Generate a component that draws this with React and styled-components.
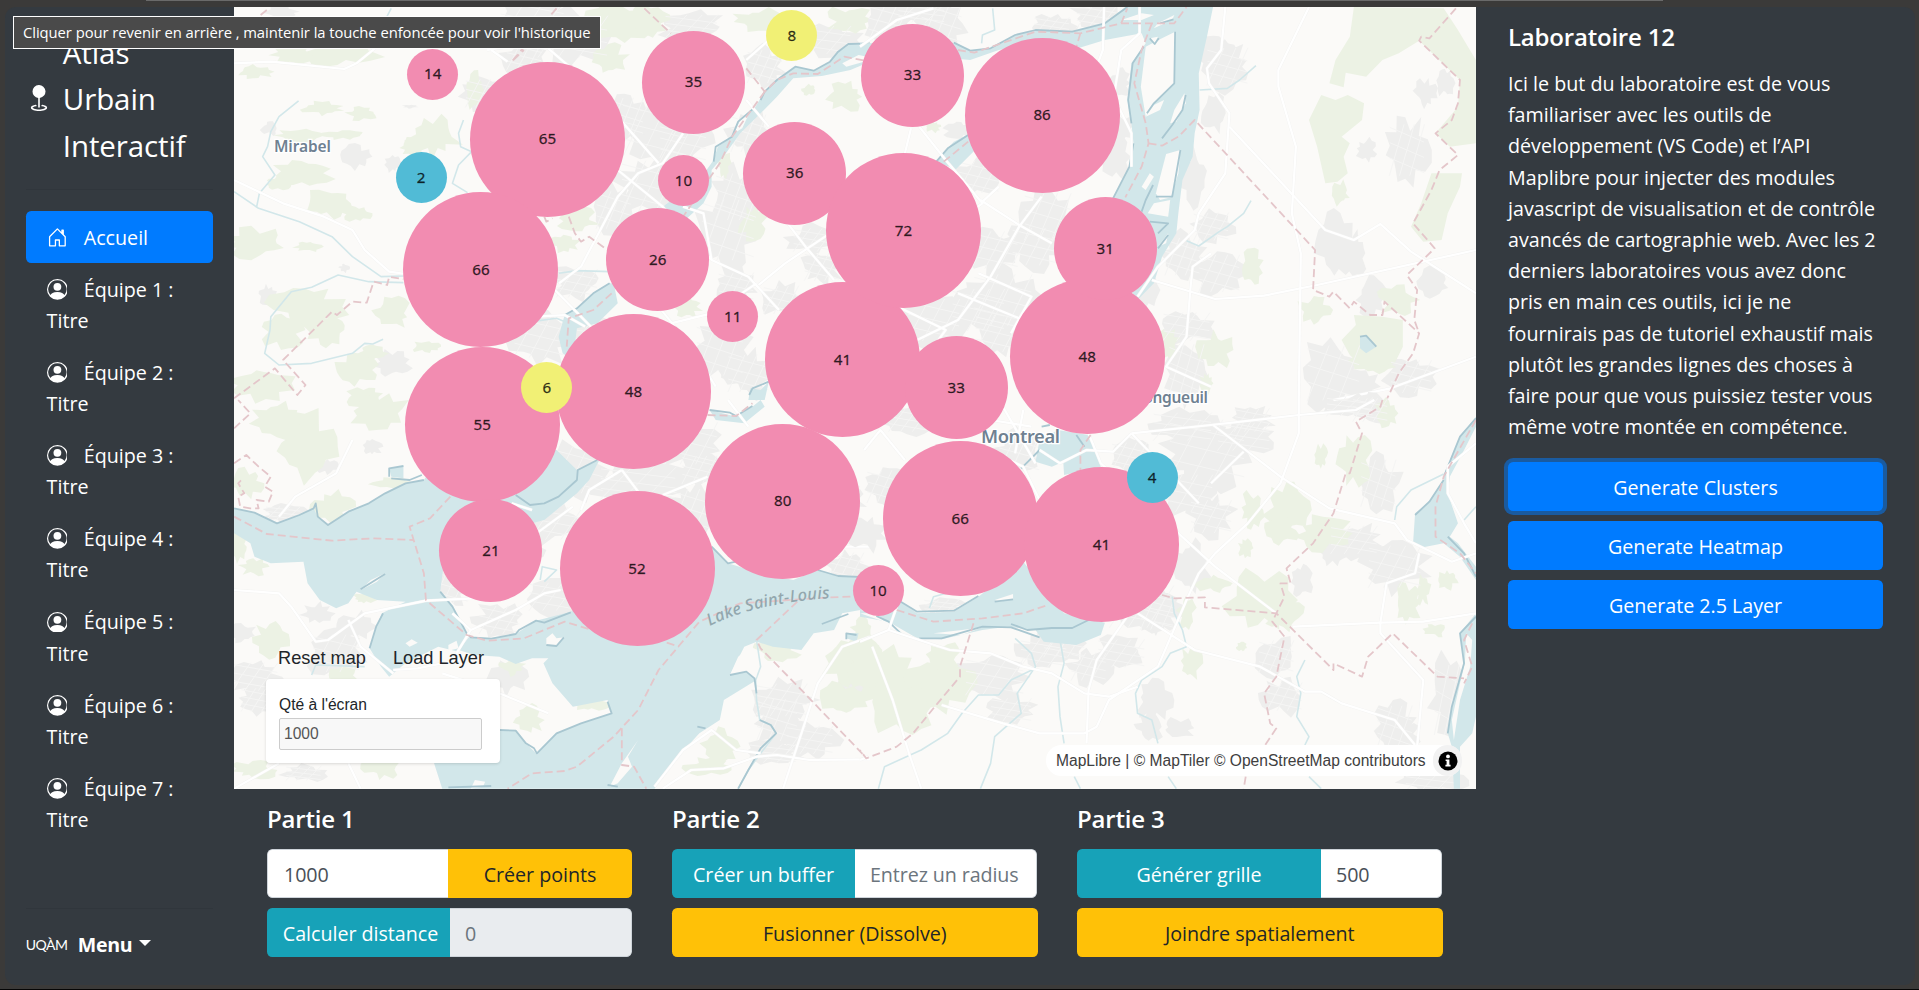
import React from 'react';
import styled, { createGlobalStyle, css } from 'styled-components';
import { BsGeoFill, BsHouseDoor, BsPersonCircle } from 'react-icons/bs';

const GlobalStyle = createGlobalStyle`
  *, *::before, *::after { box-sizing: border-box; }
  html, body { margin: 0; padding: 0; height: 990px; overflow: hidden; }
  body {
    font-family: 'Open Sans', 'Noto Sans', sans-serif;
    font-size: 19.7px;
    line-height: 31.2px;
    color: #fff;
    background: #3b3a39;
  }
  button, input { font: inherit; margin: 0; }
`;

/* ---------- window frame ---------- */

const Window = styled.div`
  position: relative;
  width: 1919px;
  height: 990px;
  padding: 7px 4px 5px 5px;
  background: #3b3a39;
  border-bottom: 1px solid #050505;
`;

const TopEdge = styled.div`
  position: absolute;
  top: 0;
  left: 146px;
  width: 1517px;
  height: 1px;
  background: #6a6a6a;
`;

const Page = styled.div`
  display: grid;
  grid-template-columns: 229px 1242px 1fr;
  height: 978px;
  border-radius: 11px;
  overflow: hidden;
  background: #343a40;
`;

const Tooltip = styled.div`
  position: absolute;
  z-index: 5;
  left: 13px;
  top: 16px;
  width: 588px;
  height: 33px;
  padding-left: 9px;
  border: 1px solid #fff;
  background: #4a4a4a;
  font-size: 14.8px;
  line-height: 31px;
  letter-spacing: -0.06px;
  white-space: nowrap;
`;

/* ---------- sidebar ---------- */

const Sidebar = styled.aside`
  display: flex;
  flex-direction: column;
  padding: 20.6px 20.8px;
`;

const Brand = styled.div`
  display: flex;
  align-items: center;
  height: 140.4px;
  font-size: 29.5px;
  line-height: 46.8px;
  letter-spacing: -0.1px;

  svg { flex: none; width: 26px; height: 26px; margin-right: 11px; }
  span { padding-top: 4px; }
`;

const Rule = styled.hr`
  width: 100%;
  height: 1px;
  margin: 20.8px 0;
  border: 0;
  background: rgba(0, 0, 0, 0.06);
`;

const Nav = styled.nav`
  display: flex;
  flex-direction: column;
  flex: 1;
`;

const NavItem = styled.a`
  padding: 11px 20.8px 9.8px;
  border-radius: 5.2px;
  color: #fff;
  white-space: nowrap;
  ${(p) => p.$active && css`background: #007bff;`}

  svg {
    width: 20.8px;
    height: 20.8px;
    margin-right: 16.3px;
    vertical-align: -3px;
  }
`;

const MenuToggle = styled.div`
  display: flex;
  align-items: center;
  height: 31px;
  margin-bottom: 4px;
  font-weight: 700;
  font-size: 19.6px;
  letter-spacing: -0.3px;
`;

const Uqam = styled.span`
  width: 52px;
  font-family: Lato, sans-serif;
  font-size: 14px;
  font-weight: 400;
  letter-spacing: -0.5px;
`;

const Caret = styled.i`
  margin: -3px 0 0 7px;
  border: 6.2px solid transparent;
  border-top-color: #fff;
  border-bottom: 0;
`;

/* ---------- centre column ---------- */

const Main = styled.main`
  display: flex;
  flex-direction: column;
`;

const MapView = styled.section`
  position: relative;
  height: 782px;
  overflow: hidden;
  background: #fbfaf8;
`;

const MapArt = styled.svg`
  display: block;
  width: 1242px;
  height: 782px;
`;

const TONES = { pink: '#f28cb1', yellow: '#f1f075', blue: '#51bbd6' };

const Cluster = styled.div`
  position: absolute;
  left: ${(p) => p.$x - p.$r - 234.5}px;
  top: ${(p) => p.$y - p.$r - 7}px;
  width: ${(p) => p.$r * 2}px;
  height: ${(p) => p.$r * 2}px;
  display: flex;
  align-items: center;
  justify-content: center;
  border-radius: 50%;
  background: ${(p) => TONES[p.$tone]};
  color: rgba(0, 0, 0, 0.78);
  font-family: 'Noto Sans', 'Open Sans', sans-serif;
  font-size: 15.2px;
  line-height: 1;
  -webkit-text-stroke: 0.35px rgba(0, 0, 0, 0.6);
`;

const MapControls = styled.div`
  position: absolute;
  left: 32px;
  bottom: 26px;
  width: 234px;
  color: #212529;
  font-family: 'Liberation Sans', Arial, sans-serif;
`;

const MapLinks = styled.div`
  display: flex;
  gap: 27px;
  height: 42px;
  padding-left: 12px;
  font-size: 18.2px;
  line-height: 42px;
`;

const CountCard = styled.label`
  display: flex;
  flex-direction: column;
  height: 84px;
  padding: 16px 18px 13px 13px;
  border-radius: 4px;
  background: #fff;
  box-shadow: 0 1px 3px rgba(0, 0, 0, 0.14);
  font-size: 15.6px;
  line-height: 20px;
`;

const CountInput = styled.input`
  height: 32px;
  margin-top: 3px;
  padding: 0 4px;
  border: 1px solid #ccc;
  border-radius: 2px;
  background: #f8f8f8;
  color: #555;
`;

const Attribution = styled.div`
  position: absolute;
  right: 14px;
  bottom: 13px;
  display: flex;
  align-items: center;
  justify-content: space-between;
  width: 416px;
  height: 31px;
  padding-left: 10px;
  border-radius: 16px;
  background: #fff;
  color: #404040;
  font: 15.6px/31px 'Liberation Sans', Arial, sans-serif;
  white-space: nowrap;
`;

const InfoButton = styled.span`
  display: flex;
  align-items: center;
  justify-content: center;
  width: 29px;
  height: 31px;
  border-radius: 15px;
  background: #f2f2f2;
`;

const Parts = styled.section`
  display: grid;
  grid-template-columns: repeat(3, 365.5px);
  gap: 39.5px;
  padding: 13px 33px 0;
`;

const Part = styled.div`
  display: flex;
  flex-direction: column;
  gap: 10px;
`;

const Heading = styled.h5`
  margin: 0;
  height: 37px;
  font-size: 24px;
  font-weight: 600;
  line-height: 33px;
  letter-spacing: -0.2px;
`;

const Group = styled.div`
  display: flex;
  width: 365px;
  height: 49px;
  border-radius: 5.2px;
  overflow: hidden;
`;

const KINDS = {
  primary: ['#007bff', '#fff'],
  warning: ['#ffc107', '#212529'],
  info: ['#17a2b8', '#fff'],
};

const Button = styled.button`
  width: ${(p) => (p.$width ? `${p.$width}px` : '100%')};
  flex: none;
  height: 49px;
  padding: 2px 0 0;
  border: 0;
  border-radius: ${(p) => (p.$width ? 0 : 5.2)}px;
  background: ${(p) => KINDS[p.$kind][0]};
  color: ${(p) => KINDS[p.$kind][1]};
  letter-spacing: -0.03px;
  white-space: nowrap;
  ${(p) => p.$focused && css`box-shadow: 0 0 0 4px rgba(0, 123, 255, 0.5);`}
`;

const DistanceButton = styled(Button)`
  padding-left: 4px;
`;

const Field = styled.input`
  flex: 1;
  min-width: 0;
  height: 49px;
  padding: 1px 12px 0 ${(p) => (p.$left ? 16 : 15)}px;
  border: 1px solid #ced4da;
  border-radius: ${(p) => (p.$left ? '5.2px 0 0 5.2px' : '0 5.2px 5.2px 0')};
  border-${(p) => (p.$left ? 'right' : 'left')}-width: 0;
  background: ${(p) => (p.disabled ? '#e9ecef' : '#fff')};
  color: #495057;
  outline: 0;
  letter-spacing: -0.1px;
  &::placeholder { color: #6c757d; opacity: 1; }
`;

/* ---------- right column ---------- */

const Lab = styled.aside`
  padding: 12.5px 32px 0;
`;

const LabText = styled.p`
  margin: 11.5px 0 19.5px;
  white-space: nowrap;
`;

const Stack = styled.div`
  display: flex;
  flex-direction: column;
  gap: 10px;
`;

/* ---------- base map ---------- */

const Urban = styled.path`fill: #eeeeed;`;
const Green = styled.path`fill: #ecf2e4;`;
const Water = styled.path`fill: #d2e7ea;`;
const Land = styled.path`fill: #fbfaf8;`;
const Line = styled.path`
  fill: none;
  vector-effect: non-scaling-stroke;
  stroke-linejoin: round;
  stroke: ${(p) => p.$c};
  stroke-width: ${(p) => p.$w};
  ${(p) => p.$dash && css`stroke-dasharray: 8 4;`}
`;
const Place = styled.text`
  font-family: 'Noto Sans', sans-serif;
  font-weight: 600;
  fill: #6f8191;
  stroke: #fff;
  stroke-width: 2.5px;
  paint-order: stroke;
`;
const LakeName = styled.text`
  font-family: 'Noto Sans', sans-serif;
  font-style: italic;
  font-weight: 500;
  font-size: 16.5px;
  fill: #93a7ae;
`;

/* ragged outline around a centre, stable for a given position */
function blob([cx, cy, rx, ry]) {
  let seed = (cx * 7919 + cy * 104729) % 2147483647;
  const rnd = () => {
    seed = (seed * 48271) % 2147483647;
    return seed / 2147483647;
  };
  const n = 19;
  let d = '';
  for (let i = 0; i < n; i += 1) {
    const a = (i / n) * Math.PI * 2;
    const k = 0.5 + rnd() * 0.6;
    d += `${i ? 'L' : 'M'}${(cx + Math.cos(a) * rx * k).toFixed(0)} ${(cy + Math.sin(a) * ry * k).toFixed(0)}`;
  }
  return `${d}Z`;
}

/* short street segments inside a built-up patch */
function streets([cx, cy, rx, ry]) {
  let d = '';
  for (let i = -1; i <= 1; i += 1) {
    const o = (i * rx) / 2.4;
    d += `M${cx + o - rx * 0.3} ${cy + ry * 0.7}L${cx + o + rx * 0.3} ${cy - ry * 0.7}`;
    const v = (i * ry) / 2.4;
    d += `M${cx - rx * 0.7} ${cy + v - ry * 0.2}L${cx + rx * 0.7} ${cy + v + ry * 0.2}`;
  }
  return d;
}

const TILES = [
  {
    at: [230, 0],
    urban: [[310, 470, 45, 40], [400, 490, 25, 30], [440, 320, 22, 6], [100, 385, 25, 25], [90, 885, 28, 35], [280, 805, 14, 15],
      [130, 35, 50, 22], [740, 60, 110, 90], [840, 110, 120, 90], [720, 170, 60, 60], [620, 280, 60, 60], [1040, 390, 110, 120], [970, 350, 60, 80], [1110, 430, 80, 80], [1270, 400, 60, 80],
      [1030, 560, 100, 110], [940, 630, 60, 80], [1220, 690, 90, 130], [1240, 590, 70, 100], [1300, 500, 40, 60], [1130, 80, 90, 50], [1450, 120, 100, 60], [1310, 200, 60, 70],
      [850, 850, 70, 60], [760, 1010, 90, 90], [900, 1000, 90, 60], [1200, 1050, 80, 110], [1270, 1120, 70, 80], [400, 1090, 50, 45], [1240, 860, 60, 60], [1430, 720, 70, 50], [1350, 900, 60, 60], [1450, 800, 60, 60]],
    green: [[270, 150, 110, 60], [150, 160, 60, 40], [60, 215, 50, 25], [230, 325, 60, 25], [320, 340, 45, 22], [170, 410, 70, 25], [280, 405, 60, 15], [500, 410, 70, 70], [450, 440, 40, 30],
      [180, 520, 80, 50], [120, 550, 40, 20], [240, 610, 60, 50], [310, 640, 40, 25], [60, 730, 90, 50], [190, 740, 40, 20], [190, 920, 100, 70], [130, 990, 60, 60], [240, 990, 60, 60], [400, 940, 50, 50],
      [310, 1110, 60, 50], [70, 1150, 90, 60], [350, 1060, 45, 25], [480, 1040, 40, 20], [600, 270, 30, 60], [950, 70, 90, 80], [1020, 60, 60, 50], [930, 180, 50, 50], [1300, 60, 80, 40], [1520, 60, 60, 50],
      [1510, 290, 50, 50], [1420, 270, 20, 20], [1280, 670, 40, 60], [1210, 490, 18, 50], [1120, 920, 40, 40], [850, 660, 60, 40], [820, 730, 40, 30], [540, 1130, 60, 50], [330, 1190, 60, 40]],
    water: ['M1568 130 1520 132 1490 155 1470 185 1430 212 1385 200 1340 240 1310 275 1285 325 1245 370 1230 410 1195 440 1185 480 1150 540 1060 620 1120 655 1160 610 1180 560 1180 510 1215 460 1250 400 1300 340 1340 290 1380 235 1450 228 1520 210 1568 185Z',
      'M930 850 890 880 850 925 820 945 805 1010 815 1060 840 1080 850 985 900 970 950 910 940 850Z',
      'M1270 1200 1275 1165 1300 1170 1320 1145 1310 1200Z'],
    land: ['M1500 190 1540 165 1568 172 1568 180 1510 200Z', 'M1235 400 1250 360 1270 345 1255 385Z'],
    shore: ['M1568 130 1515 132 1490 155 1470 185 1430 212 1385 200 1340 240 1310 275 1300 300', 'M1280 328 1245 365 1230 410 1190 440 1185 485', 'M930 850 890 880 850 925 820 945', 'M1272 1185 1280 1165 1320 1145'],
    stream: ['M168 303 120 350 100 395 92 440 80 470 110 525 72 580 65 622', 'M10 575 70 625 170 665 250 710 300 770 370 830 425 828', 'M425 848 340 845 265 825 200 862 150 875 100 950 98 990 85 1060 120 1095 200 1090 300 1060 330 1030 350 1032 375 1018',
      'M572 360 560 400 565 440 592 455 560 495 545 550 582 578', 'M806 820 850 812 930 815', 'M1110 400 1080 450', 'M740 965 800 955 850 980', 'M380 60 395 25'],
    road: ['M10 190 100 185 280 207 310 190 355 145', 'M640 150 680 185', 'M10 540 130 610 230 650 300 690 330 750 390 815 430 822', 'M630 150 760 125 870 240 1050 490', 'M806 850 860 800 950 590 1000 520 1060 490 1110 400', 'M950 510 1060 620 1180 780 1270 830 1345 930', 'M1265 300 1320 380', 'M1265 180 1320 120', 'M1295 855 1360 790 1470 700', 'M1310 580 1410 740 1480 840', 'M1080 970 1180 940 1290 850', 'M1050 920 1090 980 1150 1080 1190 1160', 'M740 800 900 1000', 'M750 950 820 945 870 980', 'M1110 620 1160 640 1180 780'],
    border: ['M10 1195 110 1105 165 1185 185 1155 130 1080 250 935 262 945 300 905 335 908 352 845 385 855 390 830 425 838', 'M830 650 845 700 860 725 880 710 930 755', 'M770 650 775 665 790 655', 'M800 25 690 185 720 150', 'M1015 25 1080 100', 'M1265 205 1310 275 1340 240 1380 220 1440 222 1505 170 1568 185', 'M1310 275 1230 410 1200 490 1160 560 1110 650', 'M935 880 890 930 830 955 825 1040', 'M75 45 95 25'],
  },
  {
    at: [860, 0],
    urban: [[70, 70, 70, 80], [200, 70, 70, 90], [150, 40, 80, 40], [580, 50, 70, 50], [470, 80, 60, 40], [900, 200, 70, 80], [870, 150, 50, 50], [870, 340, 40, 60], [635, 250, 35, 50], [630, 470, 40, 90], [640, 390, 40, 50],
      [1340, 450, 60, 110], [1240, 450, 30, 40], [1385, 280, 30, 45], [1435, 250, 22, 50], [1165, 740, 50, 110], [1210, 760, 35, 70], [860, 680, 60, 60], [790, 770, 60, 80], [880, 820, 70, 80], [820, 540, 40, 110],
      [290, 530, 70, 70], [460, 650, 80, 100], [330, 750, 80, 80], [430, 740, 80, 80], [350, 900, 100, 110], [290, 930, 90, 90], [180, 960, 90, 90], [340, 1000, 80, 80], [1250, 890, 40, 70], [1400, 850, 50, 50], [1160, 1120, 90, 120],
      [1350, 1130, 70, 70], [800, 980, 80, 60], [800, 1110, 60, 110], [700, 870, 40, 60], [240, 390, 40, 30], [1230, 1160, 50, 60]],
    green: [[960, 800, 30, 60], [1115, 930, 45, 50], [870, 1050, 50, 60], [755, 1030, 30, 50], [1178, 580, 22, 40], [1320, 900, 60, 50], [180, 380, 22, 20], [850, 1150, 20, 40], [1260, 1090, 60, 40]],
    greenShape: ['M1210 21 1430 25 1465 90 1509 180 1509 430 1445 440 1410 400 1465 320 1470 240 1370 122 1320 160 1280 180 1240 230 1190 218 1185 262 1150 250 1165 180 1200 110Z',
      'M1130 285 1165 300 1195 285 1235 310 1230 360 1180 410 1200 430 1185 470 1195 520 1170 545 1140 550 1120 440 1100 360Z',
      'M1400 520 1475 520 1470 560 1440 640 1425 720 1380 725 1350 680 1375 610Z', 'M1180 1020 1215 975 1210 945 1280 950 1330 960 1330 1040 1310 1090 1240 1110 1200 1065Z'],
    water: ['M0 130 100 128 230 128 270 152 320 145 380 105 430 90 520 95 600 70 650 21 865 21 850 110 830 220 832 330 820 400 815 470 790 540 780 640 775 700 740 770 720 850 680 900 650 850 640 700 620 595 640 550 660 500 670 430 665 370 655 300 665 190 700 130 690 100 600 120 520 150 440 130 340 150 270 180 0 150Z',
      'M270 400 230 425 210 450 185 485 235 508 290 440Z', 'M1225 1010 1240 1005 1265 1040 1240 1060 1225 1045Z'],
    land: ['M700 140 735 118 772 95 770 250 720 310 700 350 688 260Z', 'M750 462 785 450 780 520 762 592 735 600 725 580Z', 'M690 60 720 45 690 40 640 60Z', 'M720 85 765 60 770 45 730 70Z', 'M700 350 720 315 745 300 735 330Z', 'M795 280 770 330 760 370 775 365 798 310Z',
      'M710 520 720 530 700 570 690 560Z', 'M720 610 760 600 755 650 705 640Z', 'M730 740 755 700 750 730Z', 'M710 115 730 110 722 130Z'],
    shore: ['M230 128 270 152 320 145 380 105 430 90 520 95 600 70 655 21', 'M695 140 668 190 657 300 665 370', 'M670 430 660 500 620 595', 'M772 95 770 250 720 310 703 340', 'M265 405 215 445 187 485', 'M1225 1010 1240 1007 1265 1040', 'M785 450 765 590 725 590', 'M798 285 790 330 765 375 740 415', 'M710 665 755 670 730 700', 'M735 70 768 58', 'M710 115 722 132 732 115', 'M718 555 700 600 690 635', 'M755 705 730 745'],
    stream: ['M970 197 930 240 900 265 832 270', 'M958 602 940 640 900 680 880 695 830 738 800 722', 'M325 25 330 90 300 105 298 130'],
    road: ['M598 21 595 150 555 280', 'M685 21 685 100 640 150 622 290 665 400 665 500', 'M895 21 885 150 850 205 855 250 905 340 895 520 830 640 820 690 730 800 680 890', 'M1100 21 1025 210 1025 260 1068 440 1058 640 1080 760 1075 1200', 'M715 840 870 897 990 887 1120 855 1509 750', 'M905 380 1140 690 1210 720 1275 672 1350 755 1509 880', 'M1160 1200 1300 1165 1509 1070', 'M445 590 390 680 320 830 240 960 140 1020', 'M295 600 390 675 470 730', 'M145 380 210 480 300 610 200 700', 'M125 385 110 460', 'M290 820 420 890 370 1000', 'M240 880 400 960', 'M100 925 210 990 180 1040', 'M860 760 815 800 810 860 800 1010 750 1100 860 1160', 'M0 140 90 60 180 25', 'M300 605 340 560'],
    border: ['M240 150 280 158 430 95 540 100 640 70 715 70 770 70 800 21', 'M540 100 530 140', 'M715 70 690 150 672 250 700 370 707 430 690 500 650 592', 'M707 430 740 437 780 410 820 360 1115 750 1110 870 1150 890 1160 875 1200 925 1210 905 1250 945 1280 945 1285 905 1370 1000 1355 1060 1320 1120 1290 1200', 'M1460 25 1395 115 1375 110 1370 122 1470 240 1465 310 1450 360 1410 400 1465 465 1420 510 1400 570 1355 670 1408 745 1340 825 1365 870 1358 960 1370 1000', 'M205 485 265 425', 'M640 70 655 25'],
  },
  {
    at: [230, 400],
    urban: [[210, 640, 45, 35], [240, 200, 30, 25], [130, 340, 60, 30], [350, 140, 25, 30], [260, 760, 80, 80], [310, 680, 50, 50], [60, 830, 80, 60], [70, 900, 60, 50], [30, 700, 40, 30], [850, 210, 90, 100], [1000, 250, 130, 70], [1130, 130, 90, 90], [1150, 210, 60, 60],
      [800, 370, 90, 70], [700, 450, 70, 60], [790, 590, 80, 60], [660, 660, 70, 60], [540, 560, 60, 70], [1130, 330, 70, 90], [1350, 900, 90, 70], [1420, 1020, 80, 60], [1340, 960, 70, 90], [1330, 1060, 80, 40], [680, 830, 50, 60], [180, 1120, 60, 30], [1510, 500, 60, 60], [850, 480, 40, 60], [1530, 860, 50, 40], [1500, 300, 60, 60]],
    green: [[190, 140, 100, 110], [120, 60, 70, 60], [370, 40, 80, 60], [40, 250, 50, 50], [250, 320, 60, 50], [60, 500, 40, 30], [330, 595, 30, 18], [100, 720, 50, 60], [370, 1100, 50, 40], [280, 820, 40, 30], [730, 960, 40, 50], [690, 800, 40, 30], [1340, 750, 60, 40], [1520, 780, 80, 90], [1500, 900, 60, 60], [1200, 1040, 50, 60], [1170, 1100, 60, 30], [880, 910, 50, 30], [60, 1110, 60, 30], [400, 250, 60, 20], [760, 240, 40, 40], [1550, 690, 30, 50], [20, 440, 30, 50]],
    water: ['M10 325 60 338 115 370 170 345 205 325 215 350 240 375 290 335 340 310 380 280 430 250 475 240 520 160 800 150 850 210 905 180 880 240 850 280 800 330 770 360 740 370 680 340 600 380 560 420 525 480 515 575 545 620 580 700 560 755 510 740 430 790 390 830 370 800 342 745 355 690 372 640 430 605 360 600 310 575 290 610 260 625 220 600 190 550 180 485 100 490 60 470 50 430 10 400Z',
      'M560 750 585 712 640 716 700 702 750 662 835 635 900 560 1180 440 1220 490 1300 520 1380 540 1440 510 1500 530 1568 530 1568 625 1500 640 1480 690 1430 700 1400 750 1330 740 1290 725 1260 740 1225 825 1270 815 1290 840 1210 900 1200 960 1150 1000 1090 1080 1040 1166 520 1166 500 1090 640 990 700 990 725 1030 750 1060 800 1000 860 970 935 940 925 900 840 920 790 850 768 790 780 775 740 775 700 792 660 770 600 765Z',
      'M390 205 425 200 425 235 395 230Z', 'M1175 30 1240 50 1280 20 1300 0 1310 20 1260 70 1190 60Z', 'M1510 700 1540 700 1535 725 1510 715Z'],
    land: ['M320 570 345 540 380 520 360 545Z', 'M775 715 790 700 800 715 820 712 800 735 775 735Z', 'M430 730 445 718 460 728 440 740Z', 'M535 735 555 722 560 745 535 752Z', 'M1000 1020 960 1090 930 1160 950 1150 985 1100 975 1070Z', 'M1225 825 1245 770 1280 735 1290 830 1260 815Z', 'M590 1166 600 1140 625 1145 620 1160Z'],
    shore: ['M10 325 60 338 115 370 170 345 205 325 210 310 215 350 240 375 290 335 340 310 380 280 430 250 475 240', 'M700 285 735 315 770 310 805 290 850 240 852 210 900 180', 'M515 575 545 620 580 700 590 712 640 716 700 702 708 690 750 662 770 668 835 637', 'M1180 440 1220 490 1240 485', 'M1440 510 1490 528 1568 532', 'M660 990 700 992 725 1030 745 1045 752 1060 800 1000 860 970 935 940 925 905', 'M320 568 380 522', 'M775 735 800 738 818 712', 'M342 745 358 680 375 640', 'M1225 825 1265 815 1285 835 1290 880', 'M1450 672 1515 642', 'M1175 30 1225 38 1240 48 1280 18', 'M390 230 390 205 425 198', 'M1145 980 1165 985', 'M925 1155 950 1160', 'M535 1162 640 1158', 'M395 235 440 240 470 225', 'M1298 960 1325 975 1338 1000 1300 1045 1270 1110 1245 1166', 'M1510 718 1510 700 1535 705'],
    stream: ['M1290 720 1300 800 1288 840 1290 900 1298 960 1325 975 1338 1000 1300 1060 1270 1110 1245 1166', 'M1465 590 1480 560 1568 570', 'M760 540 765 500 800 510 770 545', 'M200 825 210 795 330 800'],
    road: ['M10 570 120 580 150 620 210 725 240 720 330 640 480 602 600 595', 'M555 760 590 690 700 630 770 580 810 570', 'M590 690 545 640', 'M960 210 1000 275', 'M1050 290 1170 230', 'M1220 0 1270 80', 'M860 330 880 270 960 210', 'M690 310 740 330', 'M10 1166 120 1090', 'M290 1090 320 1166', 'M120 350 160 290 260 220 300 120', 'M400 810 460 805 560 780', 'M290 660 320 740 400 820', 'M1060 1166 1130 1110 1210 1105 1290 1070 1340 1065 1420 1080 1568 1078', 'M1355 1166 1400 1000 1440 850 1500 740 1568 710', 'M1040 1160 1110 1050 1180 990 1240 1050 1300 1060', 'M520 820 620 860 780 940', 'M740 410 840 320', 'M1500 440 1568 440'],
    border: ['M10 350 90 402 250 422 350 415 450 420', 'M540 290 490 355 440 380 475 520 480 600 580 705 630 722 720 715 770 690 820 665 900 695', 'M1070 728 1100 740', 'M1520 590 1470 592 1250 610 1150 665 1050 810 1000 930 940 1010 850 1100 820 1113 740 1120 680 1166', 'M960 985 960 1095 990 1100 1020 1166', 'M1390 605 1290 720 1300 745 1400 870 1560 1075', 'M10 85 50 40 20 0', 'M10 190 40 165 70 200 100 230 85 260 105 275 95 305 65 300 70 325 50 325 25 320 20 290 35 280 20 250 28 240', 'M1170 45 1240 48 1280 10'],
  },
  {
    at: [860, 400],
    urban: [[120, 60, 70, 50], [390, 160, 70, 80], [60, 260, 60, 70], [20, 400, 50, 60], [660, 170, 60, 60], [850, 150, 130, 130], [790, 80, 100, 60], [940, 110, 90, 60], [800, 280, 90, 80], [860, 350, 70, 70], [690, 620, 110, 90], [640, 760, 80, 60], [730, 640, 60, 70], [450, 760, 80, 60], [330, 830, 100, 80], [370, 930, 70, 50], [560, 800, 60, 60], [1200, 20, 80, 40], [1250, 30, 60, 50], [1310, 500, 90, 90], [1210, 420, 80, 60], [1160, 460, 40, 40], [1080, 540, 30, 60], [1020, 770, 60, 70],
      [1040, 890, 60, 60], [1310, 980, 60, 90], [1330, 1010, 50, 50], [1450, 900, 60, 150], [780, 985, 45, 35], [710, 980, 40, 50], [200, 620, 60, 30], [1400, 1140, 90, 50], [810, 500, 50, 90], [1270, 250, 60, 100], [500, 730, 70, 60], [720, 900, 50, 70], [960, 60, 60, 50]],
    green: [[60, 830, 110, 120], [190, 850, 100, 110], [110, 920, 90, 100], [20, 800, 50, 80], [1050, 330, 60, 90], [1140, 400, 80, 60], [1030, 390, 50, 50], [960, 330, 30, 60], [980, 600, 90, 110], [1040, 640, 50, 60], [945, 445, 20, 30], [870, 550, 50, 30], [810, 790, 30, 60], [1210, 180, 50, 90], [1130, 170, 18, 40], [1340, 610, 40, 70], [1380, 570, 20, 50], [1440, 540, 28, 30], [1410, 690, 30, 25], [935, 740, 15, 15], [800, 640, 25, 50], [1290, 40, 30, 50], [205, 770, 50, 50]],
    water: ['M0 630 50 640 100 605 140 640 230 635 290 590 400 485 500 640 600 668 590 705 530 735 450 725 430 690 360 680 300 690 200 718 140 715 70 665 0 650Z',
      'M485 90 560 105 590 200 500 225 498 185 470 200 430 185 440 120Z', 'M1509 50 1470 110 1430 225 1430 240 1395 305 1360 340 1355 430 1380 442 1430 430 1470 470 1509 540 1509 500 1465 430 1445 410 1465 370 1440 280 1445 230 1480 150 1509 80Z',
      'M1509 640 1470 700 1480 790 1450 920 1440 1000 1450 1040 1455 1166 1470 1166 1470 1040 1500 1000 1509 950Z'],
    land: ['M330 600 375 582 375 598 340 605Z', 'M180 700 250 690 300 682 250 705Z', 'M1485 700 1500 720 1495 800 1470 900 1455 1020 1450 960 1470 850 1482 790Z', 'M0 640 40 640 60 665Z'],
    shore: ['M100 605 140 635 230 632 290 588', 'M145 715 200 715 300 680 370 682 440 712', 'M370 672 410 690 470 684 520 684 560 660', 'M330 605 375 598', 'M40 648 70 665 100 700', 'M1509 55 1470 110 1432 225', 'M1360 345 1395 305 1430 240', 'M1440 410 1480 460 1509 530', 'M1509 650 1470 700 1480 790 1450 920 1440 1000', 'M395 205 440 150', 'M530 105 550 140', 'M445 80 465 75'],
    stream: ['M765 590 770 640 790 690 800 740 760 760 740 800 690 840 675 880 680 940 715 960 730 1030', 'M490 720 500 790 485 860 490 950 500 1030', 'M380 715 420 760 430 800 385 880 395 940 330 1010 320 1090 295 1166', 'M1090 780 1070 830 1080 880 1070 950 1100 1010 1090 1035', 'M430 805 370 840 340 885 290 885 250 940 215 1000 150 1050 60 1100 45 1166', 'M1310 360 1315 320 1350 270 1430 222', 'M1480 360 1509 320', 'M525 1130 540 1166', 'M755 1130 775 1166', 'M1100 1130 1130 1166', 'M170 625 180 590 240 570'],
    road: ['M560 100 590 190 690 300 870 500 1020 640', 'M665 100 860 75 1075 45', 'M865 75 945 150 1030 230 1150 325 1310 370 1340 420 1450 485 1509 460', 'M1075 0 1075 100 1030 250 950 370 870 460 830 520 800 600 730 800 610 900 580 980 550 1000 440 1000 350 970 200 915', 'M1075 45 1215 30 1260 0', 'M0 725 70 690 220 750 320 760 400 800 470 820 550 880 610 890 680 860', 'M70 690 90 620', 'M665 100 760 220 830 310', 'M680 640 820 750 980 800 1090 875 1130 875 1180 910 1310 960 1360 1035', 'M1060 680 1275 668 1380 665 1509 640', 'M1275 668 1275 700 1380 840 1365 1040', 'M1370 460 1360 520 1290 550 1275 668', 'M1509 130 1440 200 1440 280 1480 370 1509 430', 'M860 250 940 155', 'M660 640 580 780 560 870 555 1030', 'M30 740 80 900 120 1060 150 1166', 'M0 1080 20 1070', 'M280 130 400 200 440 300', 'M400 30 380 160', 'M350 20 430 190', 'M320 60 420 80', 'M440 150 490 190 555 150 620 155 665 100', 'M10 150 50 90 110 180'],
    border: ['M90 630 180 665 300 655 400 640 460 615', 'M278 670 245 800 245 830 190 910 130 1000 90 1040 15 1075 0 1050', 'M740 585 770 595 845 592 845 622 1020 640 1160 810 1160 790 1230 830 1245 770 1305 700 1415 830 1480 835', 'M1280 0 1275 20 1215 65 1230 100 1200 220 1190 220 1160 340 1110 430 1045 505 1055 550 1030 550 1040 590 1010 665 1040 710 1020 830 990 880 1005 970 1020 985 990 1040', 'M1509 60 1430 230 1410 320 1410 410 1470 460 1509 520', 'M945 1130 940 1166', 'M565 105 540 150 540 210', 'M1500 670 1480 720 1500 800 1480 850'],
  },
];

function Tile({ tile }) {
  const [x, y] = tile.at;
  return (
    <g transform={`translate(${x} ${y}) scale(0.40816 0.33333)`}>
      {tile.urban.map((u, i) => <Urban key={i} d={blob(u)} />)}
      {tile.green.map((g, i) => <Green key={i} d={blob(g)} />)}
      {(tile.greenShape || []).map((d) => <Green key={d} d={d} />)}
      {tile.urban.filter((u) => u[2] > 55).map((u, i) => <Line key={i} $c="#f5f5f4" $w={1} d={streets(u)} />)}
      {tile.stream.map((d) => <Line key={d} $c="#d2e7ea" $w={1.6} d={d} />)}
      {tile.water.map((d) => <Water key={d} d={d} />)}
      {tile.land.map((d) => <Land key={d} d={d} />)}
      {tile.shore.map((d) => <Line key={d} $c="#a9c7d1" $w={1.8} d={d} />)}
      {tile.road.map((d) => <Line key={d} $c="#f3f3f2" $w={3} d={d} />)}
      {tile.road.map((d) => <Line key={d} $c="#ffffff" $w={2.2} d={d} />)}
      {tile.border.map((d) => <Line key={d} $c="#e4c6ca" $w={1.8} $dash d={d} />)}
    </g>
  );
}

function BaseMap() {
  return (
    <MapArt viewBox="234 7 1242 782">
      {TILES.map((t) => <Tile key={t.at.join()} tile={t} />)}
      <Place x="274" y="151.5" fontSize="15.6" textLength="57">Mirabel</Place>
      <Place x="1135" y="403" fontSize="15.6" textLength="73">Longueuil</Place>
      <Place x="981" y="442.5" fontSize="18.4" textLength="79">Montreal</Place>
      <path id="lake" d="M710 626 Q755 603 832 598" fill="none" />
      <LakeName textLength="124"><textPath href="#lake">Lake Saint-Louis</textPath></LakeName>
    </MapArt>
  );
}

const L = 77.5;
const M = 51.5;
const S = 25.5;
const CLUSTERS = [
  [14, 433.3, 74, S], [65, 548, 139, L], [35, 694, 82, M], [8, 792.4, 35.7, S, 'yellow'], [2, 421.5, 177.5, S, 'blue'],
  [66, 481.4, 269.7, L], [10, 683.9, 180.7, S], [36, 795.3, 173, M], [26, 658.2, 259.5, M], [11, 733.3, 316.5, S],
  [48, 634, 391.3, L], [55, 482.7, 424.5, L], [6, 547.3, 387.2, S, 'yellow'], [41, 843, 359.7, L], [33, 956.7, 387.5, M],
  [48, 1087.8, 356.2, L], [72, 904, 230.5, L], [33, 913, 75, M], [86, 1042.6, 115, L], [31, 1105.7, 248.5, M],
  [80, 783.3, 501, L], [52, 637.5, 568.8, L], [21, 491.4, 550.3, M], [66, 960.7, 518.3, L], [41, 1102, 544.7, L],
  [4, 1152.6, 477.5, S, 'blue'], [10, 878.6, 590.7, S],
];

const LAB_LINES = [
  'Ici le but du laboratoire est de vous',
  'familiariser avec les outils de',
  'développement (VS Code) et l’API',
  'Maplibre pour injecter des modules',
  'javascript de visualisation et de contrôle',
  'avancés de cartographie web. Avec les 2',
  'derniers laboratoires vous avez donc',
  'pris en main ces outils, ici je ne',
  'fournirais pas de tutoriel exhaustif mais',
  'plutôt les grandes lignes des choses à',
  'faire pour que vous puissiez tester vous',
  'même votre montée en compétence.',
];

export default function App() {
  return (
    <Window>
      <GlobalStyle />
      <TopEdge />
      <Tooltip>Cliquer pour revenir en arrière , maintenir la touche enfoncée pour voir l'historique</Tooltip>
      <Page>
        <Sidebar>
          <Brand>
            <BsGeoFill />
            <span>Atlas<br />Urbain<br />Interactif</span>
          </Brand>
          <Rule />
          <Nav>
            <NavItem $active><BsHouseDoor />Accueil</NavItem>
            {[1, 2, 3, 4, 5, 6, 7].map((n) => (
              <NavItem key={n}><BsPersonCircle />Équipe {n} :<br />Titre</NavItem>
            ))}
          </Nav>
          <Rule />
          <MenuToggle>
            <Uqam>UQÀM</Uqam>
            Menu
            <Caret />
          </MenuToggle>
        </Sidebar>

        <Main>
          <MapView>
            <BaseMap />
            {CLUSTERS.map(([count, x, y, r, tone = 'pink']) => (
              <Cluster key={`${x}-${y}`} $x={x} $y={y} $r={r} $tone={tone}>{count}</Cluster>
            ))}
            <MapControls>
              <MapLinks><span>Reset map</span><span>Load Layer</span></MapLinks>
              <CountCard>
                Qté à l'écran
                <CountInput defaultValue="1000" />
              </CountCard>
            </MapControls>
            <Attribution>
              <span>MapLibre | © MapTiler © OpenStreetMap contributors</span>
              <InfoButton>
                <svg width="20" height="20" viewBox="0 0 20 20">
                  <circle cx="10" cy="10" r="9.5" fill="#000" />
                  <circle cx="10" cy="5.4" r="1.9" fill="#fff" />
                  <path d="M7.6 8.4h3.8v5.4h1.2v1.7H7.4v-1.7h1.2v-3.7h-1z" fill="#fff" />
                </svg>
              </InfoButton>
            </Attribution>
          </MapView>

          <Parts>
            <Part>
              <Heading>Partie 1</Heading>
              <Group>
                <Field $left defaultValue="1000" />
                <Button $kind="warning" $width={184}>Créer points</Button>
              </Group>
              <Group>
                <DistanceButton $kind="info" $width={183}>Calculer distance</DistanceButton>
                <Field disabled placeholder="0" />
              </Group>
            </Part>
            <Part>
              <Heading>Partie 2</Heading>
              <Group>
                <Button $kind="info" $width={183}>Créer un buffer</Button>
                <Field placeholder="Entrez un radius" />
              </Group>
              <Button $kind="warning">Fusionner (Dissolve)</Button>
            </Part>
            <Part>
              <Heading>Partie 3</Heading>
              <Group>
                <Button $kind="info" $width={244}>Générer grille</Button>
                <Field defaultValue="500" />
              </Group>
              <Button $kind="warning">Joindre spatialement</Button>
            </Part>
          </Parts>
        </Main>

        <Lab>
          <Heading>Laboratoire 12</Heading>
          <LabText>
            {LAB_LINES.map((line) => (
              <React.Fragment key={line}>{line}<br /></React.Fragment>
            ))}
          </LabText>
          <Stack>
            <Button $kind="primary" $focused>Generate Clusters</Button>
            <Button $kind="primary">Generate Heatmap</Button>
            <Button $kind="primary">Generate 2.5 Layer</Button>
          </Stack>
        </Lab>
      </Page>
    </Window>
  );
}
